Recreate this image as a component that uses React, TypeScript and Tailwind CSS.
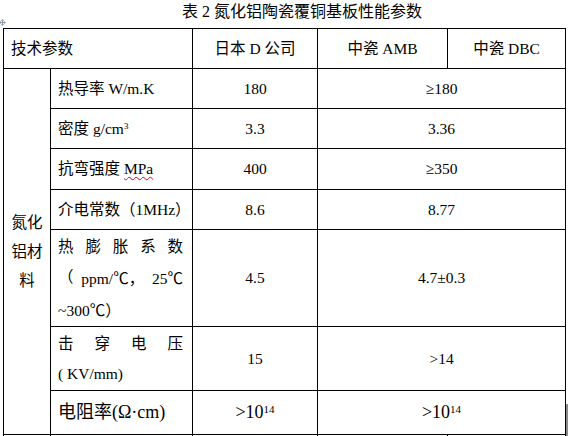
import type { ReactNode } from "react"

const font = "font-['Liberation_Serif','Noto_Sans_CJK_SC',serif]"
const cell = "border border-black align-middle"

type Row = {
   name: ReactNode
   japan: ReactNode
   zhongci: ReactNode
   height: string
}

const Deg = () => <span className="font-['Noto_Sans_CJK_SC',sans-serif]">℃</span>

const JustifyLine = ({ parts }: { parts: ReactNode[] }) => (
   <div className="flex justify-between">
      {parts.map((p, i) => (
         <span key={i}>{p}</span>
      ))}
   </div>
)

const rows: Row[] = [
   {
      name: "热导率 W/m.K",
      japan: "180",
      zhongci: "≥180",
      height: "h-[40px]",
   },
   {
      name: (
         <>
            密度 g/cm<sup className="text-[9px]">3</sup>
         </>
      ),
      japan: "3.3",
      zhongci: "3.36",
      height: "h-[40px]",
   },
   {
      name: (
         <>
            抗弯强度 <span className="underline decoration-wavy decoration-red-600 decoration-1 underline-offset-2">MPa</span>
         </>
      ),
      japan: "400",
      zhongci: "≥350",
      height: "h-[41px]",
   },
   {
      name: "介电常数（1MHz）",
      japan: "8.6",
      zhongci: "8.77",
      height: "h-[40px]",
   },
   {
      name: (
         <div className="pt-[2px] leading-[30px]">
            <JustifyLine parts={["热", "膨", "胀", "系", "数"]} />
            <JustifyLine
               parts={[
                  "（",
                  <>
                     ppm/<Deg />，
                  </>,
                  <>
                     25<Deg />
                  </>,
               ]}
            />
            <div>
               ~300<Deg />）
            </div>
         </div>
      ),
      japan: "4.5",
      zhongci: "4.7±0.3",
      height: "h-[96px]",
   },
   {
      name: (
         <div className="leading-[30px]">
            <JustifyLine parts={["击", "穿", "电", "压"]} />
            <div>( KV/mm)</div>
         </div>
      ),
      japan: "15",
      zhongci: ">14",
      height: "h-[64px]",
   },
]

export default function App() {
   return (
      <div className={`relative min-h-[436px] bg-white text-black ${font}`}>
         <div className="h-[28px] pl-[36px] text-center text-[16px] leading-[24px]">
            表 2 氮化铝陶瓷覆铜基板性能参数
         </div>

         {/* word table move handle */}
         <svg className="absolute left-[-1px] top-[19px]" width="7" height="7" viewBox="0 0 7 7">
            <path d="M3.5 0 L5 2 L4 2 L4 3 L5 3 L5 2 L7 3.5 L5 5 L5 4 L4 4 L4 5 L5 5 L3.5 7 L2 5 L3 5 L3 4 L2 4 L2 5 L0 3.5 L2 2 L2 3 L3 3 L3 2 L2 2 Z" fill="#8a96a0" />
         </svg>

         <div className="pl-[3px]">
            <table className="w-[562px] table-fixed border-collapse text-[15.5px]">
               <colgroup>
                  <col className="w-[47px]" />
                  <col className="w-[142px]" />
                  <col className="w-[125px]" />
                  <col className="w-[130px]" />
                  <col className="w-[118px]" />
               </colgroup>
               <tbody>
                  <tr className="h-[40px]">
                     <td colSpan={2} className={`${cell} px-[7px] text-left`}>
                        技术参数
                     </td>
                     <td className={`${cell} text-center`}>日本 D 公司</td>
                     <td className={`${cell} text-center`}>中瓷 AMB</td>
                     <td className={`${cell} text-center`}>中瓷 DBC</td>
                  </tr>

                  {rows.map((row, i) => (
                     <tr key={i} className={row.height}>
                        {i === 0 && (
                           <td rowSpan={7} className={`${cell} px-[4px] text-center leading-[29px]`}>
                              氮化
                              <br />
                              铝材
                              <br />料
                           </td>
                        )}
                        <td className={`${cell} pl-[7px] pr-[9px] text-left`}>{row.name}</td>
                        <td className={`${cell} text-center`}>{row.japan}</td>
                        <td colSpan={2} className={`${cell} text-center`}>
                           {row.zhongci}
                        </td>
                     </tr>
                  ))}

                  <tr className="h-[44px] text-[18px]">
                     <td className={`${cell} pl-[7px] text-left`}>电阻率(Ω·cm)</td>
                     <td className={`${cell} text-center`}>
                        &gt;10<sup className="text-[11px]">14</sup>
                     </td>
                     <td colSpan={2} className={`${cell} text-center`}>
                        &gt;10<sup className="text-[11px]">14</sup>
                     </td>
                  </tr>

                  <tr className="h-[40px]">
                     <td className={cell}></td>
                     <td className={cell}></td>
                     <td className={cell}></td>
                     <td className={cell}></td>
                     <td className={cell}></td>
                  </tr>
               </tbody>
            </table>
         </div>

         {/* right-edge marker */}
         <div className="absolute left-[566px] top-[404px] h-[32px] w-[2px] bg-[#8c8c8c]" />
      </div>
   )
}
